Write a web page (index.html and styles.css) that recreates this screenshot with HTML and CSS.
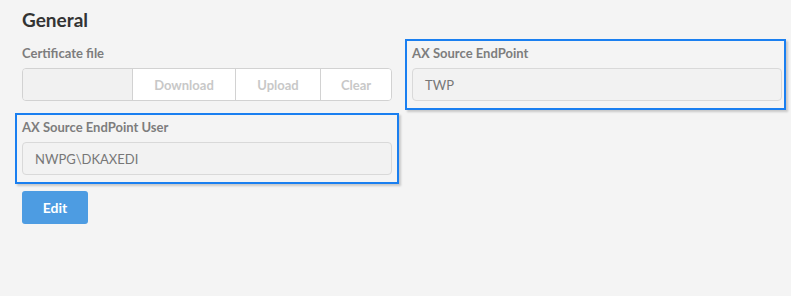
FILE: index.html
```html
<!DOCTYPE html>
<html>
<head>
<meta charset="utf-8">
<link rel="stylesheet" href="styles.css">
</head>
<body>
<div class="page">
  <h2 class="title">General</h2>
  <div class="grid">
    <div class="field">
      <div class="label">Certificate file</div>
      <div class="file-group">
        <div class="file-name"></div>
        <div class="file-btn btn-download">Download</div>
        <div class="file-btn btn-upload">Upload</div>
        <div class="file-btn btn-clear">Clear</div>
      </div>
    </div>
    <div class="field hl hl-right">
      <div class="label">AX Source EndPoint</div>
      <div class="input">TWP</div>
    </div>
    <div class="field hl hl-left">
      <div class="label">AX Source EndPoint User</div>
      <div class="input">NWPG\DKAXEDI</div>
    </div>
  </div>
  <button class="edit">Edit</button>
</div>
</body>
</html>
```
FILE: styles.css
```css
html, body {
  margin: 0;
  padding: 0;
  background: #f4f4f4;
  font-family: Lato, "Open Sans", sans-serif;
}
.page {
  padding: 8px 0 0 22px;
}
.title {
  margin: 0 0 12px 0;
  font-size: 19px;
  line-height: 24px;
  font-weight: 700;
  color: #333;
}
.grid {
  display: grid;
  grid-template-columns: 370px 370px;
  column-gap: 20px;
  row-gap: 17px;
}
.field {
  position: relative;
}
.label {
  font-size: 13px;
  line-height: 18px;
  font-weight: 700;
  color: #7d7d7d;
  margin-bottom: 6px;
}
.file-group {
  display: flex;
  height: 33px;
  box-sizing: border-box;
  border: 1px solid #d2d2d2;
  border-radius: 4px;
  overflow: hidden;
}
.file-name {
  width: 109px;
  background: #f1f1f1;
  border-right: 1px solid #d2d2d2;
}
.file-btn {
  background: #fff;
  color: #c8c8c8;
  font-size: 13px;
  font-weight: 700;
  display: flex;
  align-items: center;
  justify-content: center;
  border-right: 1px solid #d2d2d2;
}
.btn-download { width: 102px; }
.btn-upload { width: 84px; }
.btn-clear { flex: 1; border-right: 0; }
.input {
  height: 33px;
  box-sizing: border-box;
  border: 1px solid #d9d9d9;
  border-radius: 4px;
  background: #f2f2f2;
  padding: 0 12px;
  display: flex;
  align-items: center;
  font-size: 13px;
  color: #777;
}
.hl::before {
  content: "";
  position: absolute;
  border: 2px solid #1a7ff0;
  box-shadow: 2px 2px 2px rgba(0,0,0,0.18);
  pointer-events: none;
}
.hl-right::before {
  top: -5px;
  left: -7px;
  right: -4px;
  bottom: -9px;
}
.hl-left::before {
  top: -5px;
  left: -7px;
  right: -7px;
  bottom: -9px;
}
.edit {
  margin-top: 16px;
  width: 66px;
  height: 33px;
  border: 0;
  border-radius: 3px;
  background: #4d9ce2;
  color: #fff;
  font-family: Lato, "Open Sans", sans-serif;
  font-size: 14px;
  font-weight: 700;
  padding: 0;
}
```
